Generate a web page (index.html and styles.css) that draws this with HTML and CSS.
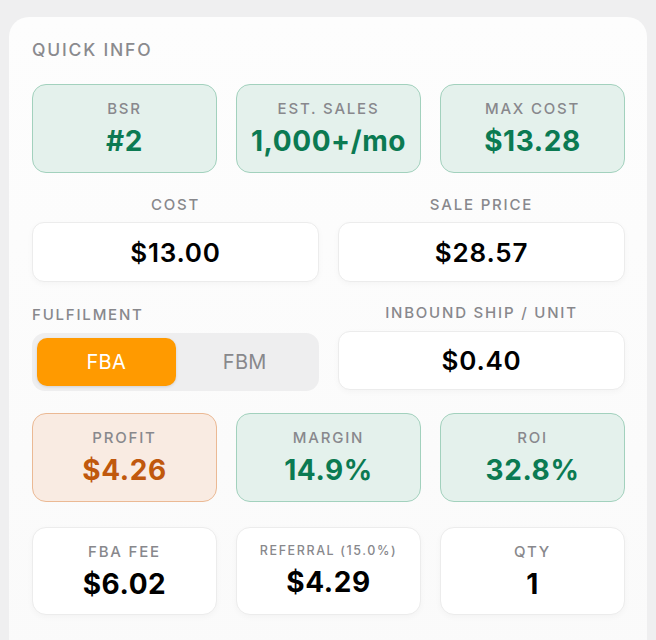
FILE: index.html
```html
<!DOCTYPE html>
<html>
<head>
<meta charset="utf-8">
<link rel="stylesheet" href="styles.css">
</head>
<body>
<div class="card">
  <div class="title">QUICK INFO</div>

  <div class="grid3 row1">
    <div class="stat green"><div class="lbl">BSR</div><div class="val">#2</div></div>
    <div class="stat green"><div class="lbl">EST. SALES</div><div class="val">1,000+/mo</div></div>
    <div class="stat green"><div class="lbl">MAX COST</div><div class="val">$13.28</div></div>
  </div>

  <div class="grid2 row2">
    <div class="field"><div class="flabel center">COST</div><div class="input">$13.00</div></div>
    <div class="field"><div class="flabel center">SALE PRICE</div><div class="input">$28.57</div></div>
  </div>

  <div class="grid2 row3">
    <div class="field"><div class="flabel left">FULFILMENT</div>
      <div class="toggle"><div class="opt on">FBA</div><div class="opt">FBM</div></div>
    </div>
    <div class="field"><div class="flabel center">INBOUND SHIP / UNIT</div><div class="input">$0.40</div></div>
  </div>

  <div class="grid3 row4">
    <div class="stat orange"><div class="lbl">PROFIT</div><div class="val">$4.26</div></div>
    <div class="stat green"><div class="lbl">MARGIN</div><div class="val">14.9%</div></div>
    <div class="stat green"><div class="lbl">ROI</div><div class="val">32.8%</div></div>
  </div>

  <div class="grid3 row5">
    <div class="stat plain"><div class="lbl">FBA FEE</div><div class="val">$6.02</div></div>
    <div class="stat plain"><div class="lbl small">REFERRAL (15.0%)</div><div class="val">$4.29</div></div>
    <div class="stat plain"><div class="lbl">QTY</div><div class="val">1</div></div>
  </div>
</div>
</body>
</html>
```

FILE: styles.css
```css
html, body {
  margin: 0;
  padding: 0;
  background: #efeff0;
  height: 100%;
  overflow: hidden;
}
body {
  padding: 17px 9px 0 9px;
  font-family: Inter, "Noto Sans", "Liberation Sans", sans-serif;
  box-sizing: border-box;
}
.card {
  background: linear-gradient(180deg, #fdfdfd 0%, #fafafa 100%);
  border-radius: 20px 20px 0 0;
  padding: 22px 22px 40px 23px;
  min-height: 660px;
  box-sizing: border-box;
}
.title {
  font-size: 17.5px;
  font-weight: 500;
  letter-spacing: 1.8px;
  color: #8a8a8e;
  line-height: 22px;
}
.grid3 {
  display: grid;
  grid-template-columns: 185px 185px 185px;
  column-gap: 19px;
}
.grid2 {
  display: grid;
  grid-template-columns: 287px 287px;
  column-gap: 19px;
}
.row1 { margin-top: 23px; }
.row2 { margin-top: 23px; }
.row3 { margin-top: 22px; }
.row4 { margin-top: 22px; }
.row5 { margin-top: 25px; }

.stat {
  height: 89px;
  box-sizing: border-box;
  border-radius: 14px;
  display: flex;
  flex-direction: column;
  align-items: center;
  padding-top: 15px;
}
.stat.green {
  background: #e4f1ec;
  border: 1.5px solid #a2d1bd;
}
.stat.orange {
  background: #f9ebe2;
  border: 1.5px solid #ebb994;
}
.stat.plain {
  background: #ffffff;
  border: 1px solid #ececec;
  box-shadow: 0 2px 6px rgba(0,0,0,0.03);
  height: 88px;
}
.lbl {
  font-size: 15px;
  font-weight: 500;
  letter-spacing: 1.8px;
  color: #88888c;
  line-height: 18px;
}
.lbl.small {
  font-size: 12.5px;
  letter-spacing: 1.6px;
  line-height: 16px;
}
.val {
  margin-top: 6px;
  font-size: 28px;
  font-weight: 700;
  line-height: 34px;
  letter-spacing: 0.6px;
  color: #0b7a52;
}
.stat.orange .val { color: #c0580d; }
.stat.plain .val { color: #000; }

.field {
  display: flex;
  flex-direction: column;
}
.flabel {
  font-size: 15px;
  font-weight: 500;
  letter-spacing: 1.8px;
  color: #88888c;
  line-height: 18px;
}
.flabel.center { text-align: center; }
.flabel.left { text-align: left; margin-top: 2px; }
.input {
  margin-top: 8px;
  height: 60px;
  box-sizing: border-box;
  background: #fff;
  border: 1px solid #ececec;
  border-radius: 12px;
  box-shadow: 0 2px 6px rgba(0,0,0,0.03);
  display: flex;
  align-items: center;
  justify-content: center;
  font-size: 26px;
  font-weight: 600;
  letter-spacing: 0.8px;
  color: #000;
}
.row3 .input { margin-top: 9px; height: 59px; }
.toggle {
  margin-top: 9px;
  height: 58px;
  box-sizing: border-box;
  background: #eeeeef;
  border-radius: 13px;
  padding: 5px;
  display: flex;
}
.opt {
  flex: 1;
  display: flex;
  align-items: center;
  justify-content: center;
  font-size: 20px;
  font-weight: 400;
  letter-spacing: 0.3px;
  color: #88888c;
  border-radius: 10px;
}
.opt.on {
  background: #ff9a00;
  color: #fff;
  box-shadow: 0 1px 3px rgba(0,0,0,0.12);
}
```
